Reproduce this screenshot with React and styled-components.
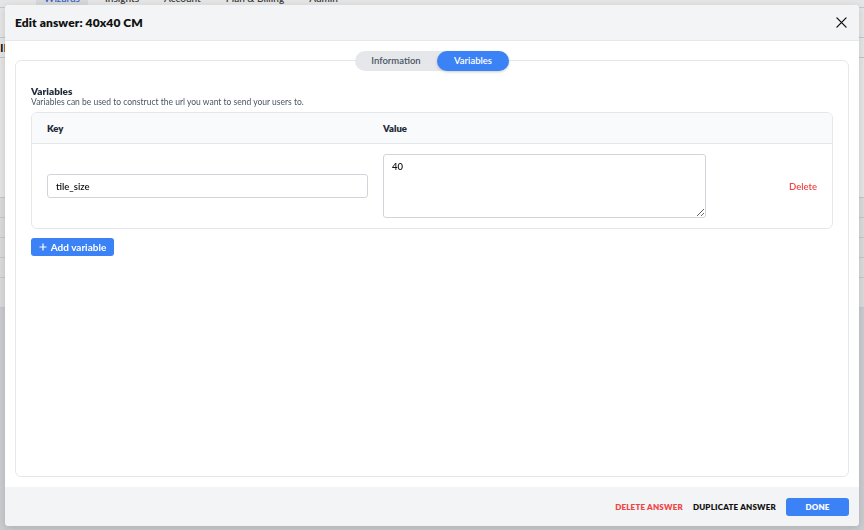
import React from "react";
import styled, { createGlobalStyle } from "styled-components";

const GlobalStyle = createGlobalStyle`
  html, body { margin: 0; padding: 0; }
  body { font-family: Lato, "Open Sans", sans-serif; background: #fff; }
  * { box-sizing: border-box; }
`;

const Page = styled.div`
  width: 864px;
  height: 530px;
  overflow: hidden;
  background: #fff;
`;

const Nav = styled.div`
  display: flex;
  align-items: flex-end;
  gap: 25px;
  height: 8px;
  padding-left: 36px;
  border-bottom: 1px solid #ddd;
`;

const NavTab = styled.div`
  height: 18px;
  margin-top: -10px;
  padding: 0 ${(p) => (p.$active ? "8px" : "0")};
  font-size: 10px;
  font-weight: 600;
  line-height: 18px;
  color: ${(p) => (p.$active ? "#3b6fd9" : "#444")};
  background: ${(p) => (p.$active ? "#eef0f3" : "transparent")};
  &:nth-child(2) { margin-left: -8px; }
`;

const Side = styled.div`
  display: flex;
  flex-direction: column;
`;

const SideRow = styled.div`
  height: ${(p) => p.$h}px;
  background: ${(p) => p.$bg || "#fff"};
  border-bottom: 1px solid #ddd;
  font-size: 12px;
  font-weight: 700;
  color: #111;
  line-height: ${(p) => p.$h}px;
`;

const Overlay = styled.div`
  position: fixed;
  inset: 0;
  background: rgba(0, 0, 0, 0.1);
`;

const Modal = styled.div`
  position: fixed;
  top: 5px;
  left: 5px;
  right: 5px;
  bottom: 4px;
  background: #fff;
  border-radius: 4px;
  box-shadow: 0 2px 8px rgba(0, 0, 0, 0.15);
  display: flex;
  flex-direction: column;
  overflow: hidden;
`;

const Header = styled.div`
  height: 36px;
  flex: none;
  display: flex;
  align-items: center;
  justify-content: space-between;
  padding: 0 10px;
  background: #f3f4f6;
  border-bottom: 1px solid #e5e7eb;
`;

const Title = styled.h1`
  margin: 0;
  font-size: 12px;
  font-weight: 800;
  color: #111;
  letter-spacing: 0.1px;
`;

const CloseButton = styled.button`
  border: 0;
  background: transparent;
  padding: 0;
  width: 12px;
  height: 12px;
  display: flex;
  align-items: center;
  justify-content: center;
  margin-right: 2px;
  cursor: pointer;
`;

const Body = styled.div`
  flex: 1;
  padding: 19px 10px 10px;
  display: flex;
  flex-direction: column;
`;

const Card = styled.div`
  position: relative;
  flex: 1;
  border: 1px solid #e5e7eb;
  border-radius: 6px;
  padding: 24px 15px 0 15px;
`;

const TabSwitch = styled.div`
  position: absolute;
  top: -10px;
  left: 50%;
  transform: translateX(-50%);
  display: flex;
  height: 20px;
  background: #e5e7eb;
  border-radius: 10px;
`;

const Tab = styled.div`
  height: 20px;
  border-radius: 10px;
  font-size: 9.5px;
  font-weight: 600;
  line-height: 20px;
  color: ${(p) => (p.$active ? "#fff" : "#4b5563")};
  background: ${(p) => (p.$active ? "#3b82f6" : "transparent")};
  box-shadow: ${(p) => (p.$active ? "0 1px 3px rgba(0,0,0,0.2)" : "none")};
  width: ${(p) => p.$w}px;
  text-align: center;
`;

const SectionTitle = styled.div`
  font-size: 10px;
  font-weight: 800;
  color: #1f2937;
  line-height: 12px;
`;

const SectionDesc = styled.div`
  font-size: 8.5px;
  color: #4b5563;
  line-height: 10px;
`;

const Table = styled.div`
  margin-top: 5px;
  border: 1px solid #e5e7eb;
  border-radius: 6px;
  overflow: hidden;
`;

const Grid = styled.div`
  display: grid;
  grid-template-columns: 336px 339px 1fr;
  align-items: center;
`;

const HeadRow = styled(Grid)`
  height: 31px;
  background: #f9fafb;
  border-bottom: 1px solid #e5e7eb;
`;

const HeadCell = styled.div`
  padding-left: 15px;
  font-size: 9.5px;
  font-weight: 800;
  color: #1f2937;
`;

const BodyRow = styled(Grid)`
  padding: 10px 0;
`;

const Cell = styled.div`
  padding: 0 ${(p) => p.$pr || 0}px 0 ${(p) => p.$pl || 0}px;
  display: flex;
  justify-content: ${(p) => p.$justify || "flex-start"};
`;

const TextInput = styled.input`
  width: 321px;
  height: 24px;
  border: 1px solid #d1d5db;
  border-radius: 3px;
  padding: 0 8px;
  font-family: inherit;
  font-size: 9.5px;
  font-weight: 600;
  color: #111;
  outline: none;
`;

const TextArea = styled.textarea`
  width: 323px;
  height: 64px;
  border: 1px solid #d1d5db;
  border-radius: 3px;
  padding: 6px 8px;
  font-family: inherit;
  font-size: 9.5px;
  font-weight: 600;
  color: #111;
  outline: none;
  display: block;
`;

const DeleteLink = styled.button`
  border: 0;
  background: transparent;
  padding: 0;
  font-family: inherit;
  font-size: 9.5px;
  font-weight: 600;
  color: #ef4444;
`;

const AddButton = styled.button`
  margin-top: 9px;
  align-self: flex-start;
  height: 18px;
  width: 83px;
  border: 0;
  border-radius: 3px;
  background: #3b82f6;
  color: #fff;
  font-family: inherit;
  font-size: 10px;
  font-weight: 700;
  display: flex;
  align-items: center;
  justify-content: center;
  gap: 4px;
  padding: 0;
`;

const Footer = styled.div`
  height: 39px;
  flex: none;
  background: #f3f4f6;
  display: flex;
  align-items: center;
  justify-content: flex-end;
  padding: 0 10px;
`;

const TextButton = styled.button`
  border: 0;
  background: transparent;
  padding: 0 10px 0 0;
  font-family: inherit;
  font-size: 8px;
  font-weight: 800;
  letter-spacing: 0.2px;
  color: ${(p) => p.$color};
`;

const DoneButton = styled.button`
  width: 63px;
  height: 18px;
  border: 0;
  border-radius: 3px;
  background: #3b82f6;
  color: #fff;
  font-family: inherit;
  font-size: 8px;
  font-weight: 800;
  letter-spacing: 0.2px;
`;

const CardInner = styled.div`
  display: flex;
  flex-direction: column;
`;

export default function App() {
  return (
    <>
      <GlobalStyle />
      <Page>
        <Nav>
          <NavTab $active>Wizards</NavTab>
          <NavTab>Insights</NavTab>
          <NavTab>Account</NavTab>
          <NavTab>Plan &amp; Billing</NavTab>
          <NavTab>Admin</NavTab>
        </Nav>
        <Side>
          <SideRow $h={30} />
          <SideRow $h={20}>II</SideRow>
          <SideRow $h={140} />
          <SideRow $h={20} $bg="#f4f4f4" />
          <SideRow $h={20} $bg="#f4f4f4" />
          <SideRow $h={20} $bg="#f4f4f4" />
          <SideRow $h={20} $bg="#f4f4f4" />
          <SideRow $h={30} $bg="#f4f4f4" />
          <SideRow $h={240} $bg="#e2e3e7" />
        </Side>
      </Page>
      <Overlay />
      <Modal>
        <Header>
          <Title>Edit answer: 40x40 CM</Title>
          <CloseButton aria-label="Close">
            <svg width="11" height="11" viewBox="0 0 12 12">
              <path d="M1 1L11 11M11 1L1 11" stroke="#111" strokeWidth="1.4" strokeLinecap="round" />
            </svg>
          </CloseButton>
        </Header>
        <Body>
          <Card>
            <TabSwitch>
              <Tab $w={82}>Information</Tab>
              <Tab $w={72} $active>Variables</Tab>
            </TabSwitch>
            <CardInner>
              <SectionTitle>Variables</SectionTitle>
              <SectionDesc>Variables can be used to construct the url you want to send your users to.</SectionDesc>
              <Table>
                <HeadRow>
                  <HeadCell>Key</HeadCell>
                  <HeadCell>Value</HeadCell>
                  <div />
                </HeadRow>
                <BodyRow>
                  <Cell $pl={15}>
                    <TextInput defaultValue="tile_size" />
                  </Cell>
                  <Cell $pl={15}>
                    <TextArea defaultValue="40" />
                  </Cell>
                  <Cell $justify="flex-end" $pr={15}>
                    <DeleteLink>Delete</DeleteLink>
                  </Cell>
                </BodyRow>
              </Table>
              <AddButton>
                <svg width="8" height="8" viewBox="0 0 8 8">
                  <path d="M4 0.5V7.5M0.5 4H7.5" stroke="#fff" strokeWidth="1.2" />
                </svg>
                Add variable
              </AddButton>
            </CardInner>
          </Card>
        </Body>
        <Footer>
          <TextButton $color="#ef4444">DELETE ANSWER</TextButton>
          <TextButton $color="#111">DUPLICATE ANSWER</TextButton>
          <DoneButton>DONE</DoneButton>
        </Footer>
      </Modal>
    </>
  );
}
